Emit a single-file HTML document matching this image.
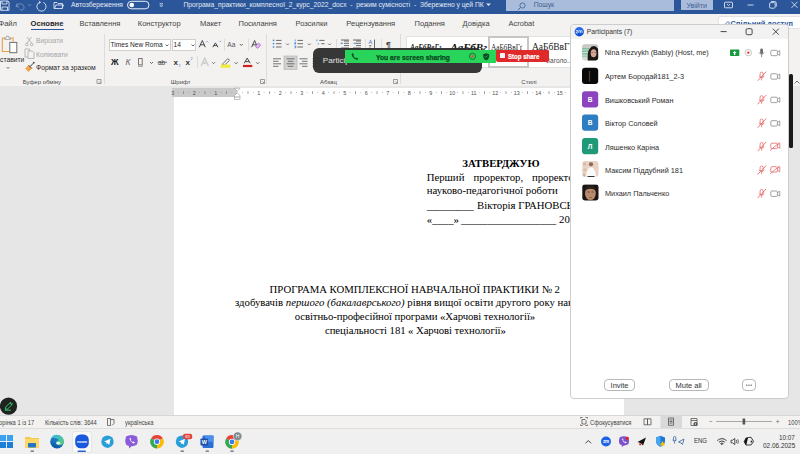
<!DOCTYPE html>
<html><head><meta charset="utf-8">
<style>
*{margin:0;padding:0;box-sizing:border-box}
html,body{width:800px;height:454px;overflow:hidden;background:#e6e6e6;font-family:"Liberation Sans",sans-serif;position:relative}
.a{position:absolute}
.t{position:absolute;white-space:pre;line-height:1}
svg{position:absolute;overflow:visible}
#title{left:0;top:0;width:800px;height:14px;background:#2b579a}
#tabs{left:0;top:14px;width:800px;height:17px;background:#f3f2f1}
#ribbon{left:0;top:31px;width:800px;height:56px;background:#f3f2f1;border-bottom:1px solid #dcdcdc}
#ruler{left:172px;top:88px;width:617px;height:9px;background:#fff}
#page{left:174px;top:97px;width:450px;height:318px;background:#fff}
#status{left:0;top:415px;width:800px;height:13px;background:#f3f2f1;border-top:1px solid #d6d6d6}
#taskbar{left:0;top:428px;width:800px;height:26px;background:#f0f0f0;border-top:1px solid #dedede}
.tt{font-size:6.75px;color:#e3e9f3;top:2px}
.tab{font-size:7.5px;color:#444;top:19.7px}
.rb{font-size:6.75px;color:#262626}
.dis{color:#a6a6a6}
.grp{font-size:6px;color:#484848;top:78.6px}
.sep{position:absolute;width:1px;background:#dcdcdc}
.doc{font-family:"Liberation Serif",serif;font-size:10.75px;color:#000;position:absolute;white-space:pre;line-height:1}
.st{font-size:6.3px;color:#444;top:419.5px;transform-origin:0 0;transform:scaleX(0.92)}
#zp{left:570.3px;top:23.8px;width:219px;height:375.2px;background:#fff;border:1px solid #cdcdcd;border-radius:4px;overflow:hidden}
#zph{left:0;top:0;width:219px;height:16px;background:#f2f2f2}
.pn{font-size:7.3px;color:#2e2e2e}
</style></head><body>
<!-- TITLE BAR -->
<div id="title" class="a"></div>
<svg style="left:0;top:0" width="800" height="14">
  <g fill="none" stroke="#dbe4f2" stroke-width="0.9">
    <!-- save -->
    <path d="M0.5 1h7.5l1 1v8.3h-8.5z"/><path d="M2 1v3h5v-3"/><path d="M2 10.3v-3.3h5.5v3.3"/>
    <!-- undo faded -->
    <path d="M17 3.5l-1 3 3 0.5" stroke="#7d97c4"/><path d="M16.3 6.3c1.5-3 6.5-3.5 7.5 0s-2 4.5-4 3" stroke="#7d97c4"/>
    <path d="M28 4.3l1.5 1.5 1.5-1.5" stroke="#7d97c4"/>
    <!-- redo circle -->
    <path d="M40 2.2a4.6 4.6 0 1 0 3.4 0.2"/><path d="M39 0.8l1.5 1.5-1.5 1.5"/>
    <!-- folder -->
    <path d="M54 2.5h3l1 1h4.5v5h-8.5z"/><path d="M54.5 8.3l1.5-3.3h7.5l-1.5 3.3"/>
    <!-- toggle -->
    <rect x="127.5" y="1.3" width="21.5" height="7.5" rx="3.75" stroke="#e8eef7" stroke-width="1"/>
    <path d="M159.5 3.5h3.5M159.8 5l1.5 2 1.5-2z" stroke="#b9c8e0" stroke-width="0.8"/>
  </g>
  <circle cx="131.8" cy="5" r="2.3" fill="#fff"/>
</svg>
<div class="t tt" style="left:71px">Автозбереження</div>
<div class="t tt" style="left:183.5px">Програма_практики_комплесної_2_курс_2022_docx  -  режим сумісності  -  Збережено у цей ПК</div>
<svg style="left:486px;top:3px" width="6" height="4"><path d="M0 0.5h5l-2.5 2.5z" fill="#dbe4f2"/></svg>
<div class="a" style="left:505.5px;top:0;width:168.5px;height:11px;background:#aabcdb"></div>
<svg style="left:517px;top:1.5px" width="10" height="10"><circle cx="5.5" cy="3.5" r="2.6" fill="none" stroke="#3b5f98" stroke-width="0.8"/><path d="M3.6 5.4l-2.6 2.6" stroke="#3b5f98" stroke-width="0.9"/></svg>
<div class="t tt" style="left:533.7px;color:#3d5d90">Пошук</div>
<div class="a" style="left:681px;top:0;width:31.6px;height:10px;background:#aabcdb"></div>
<div class="t tt" style="left:686.5px;top:2.3px;font-size:7px;color:#3f5f94">Увійти</div>
<svg style="left:0;top:0" width="800" height="14">
  <g fill="none" stroke="#dbe4f2" stroke-width="0.9">
    <rect x="724.5" y="2.2" width="8" height="5.6" rx="0.6"/><path d="M727 4.2l1.5 1.3 1.5-1.3"/>
    <path d="M747.5 5h6"/>
    <rect x="769.6" y="2.6" width="5.6" height="5.6" rx="1.3"/><path d="M771.2 1.5h3.3q1.8 0 1.8 1.8v3.3"/>
    <path d="M791.5 1.8l6 6M797.5 1.8l-6 6"/>
  </g>
</svg>
<!-- TABS -->
<div id="tabs" class="a"></div>
<div class="t tab" style="left:-1.5px">Файл</div>
<div class="t tab" style="left:30.5px;font-weight:bold;color:#262626;font-size:7.63px">Основне</div>
<div class="a" style="left:30.5px;top:28.6px;width:33px;height:1.8px;background:#2b579a"></div>
<div class="t tab" style="left:79.4px">Вставлення</div>
<div class="t tab" style="left:137.8px">Конструктор</div>
<div class="t tab" style="left:200px">Макет</div>
<div class="t tab" style="left:238.5px">Посилання</div>
<div class="t tab" style="left:295.5px">Розсилки</div>
<div class="t tab" style="left:346.3px">Рецензування</div>
<div class="t tab" style="left:414.6px">Подання</div>
<div class="t tab" style="left:462.6px">Довідка</div>
<div class="t tab" style="left:508.5px">Acrobat</div>
<!-- share button -->
<div class="a" style="left:718px;top:16px;width:84px;height:13px;background:#fff;border:1px solid #e3e3e3;border-radius:2px"></div>
<svg style="left:722px;top:19.5px" width="9" height="9"><path d="M1.5 7.5l0.5-2 4-4 1.5 1.5-4 4z" fill="none" stroke="#2b579a" stroke-width="0.8"/></svg>
<div class="t" style="left:730.6px;top:19.6px;font-size:7.4px;font-weight:bold;color:#2b579a">Спільний доступ</div>
<!-- RIBBON -->
<div id="ribbon" class="a"></div>
<svg style="left:0;top:0" width="800" height="90">
  <!-- paste icon -->
  <g fill="none">
    <path d="M4.8 38h-2.5v13.5h7" stroke="#eba043" stroke-width="1.1"/><path d="M10.3 38h2.8v3.8" stroke="#eba043" stroke-width="1.1"/>
    <path d="M4.6 39.3h6v-1.3h-1.4l-0.9-1.8h-1.6l-0.9 1.8h-1.2z" stroke="#8a8a8a" stroke-width="0.8" fill="#fff"/>
  </g>
  <rect x="9.8" y="42.4" width="7" height="10.3" fill="#fff" stroke="#707070" stroke-width="1"/>
  <path d="M6.5 67l1.5 1.5 1.5-1.5" fill="none" stroke="#555" stroke-width="0.8"/>
  <!-- scissors -->
  <g fill="none" stroke="#a8a8a8" stroke-width="0.8">
    <path d="M27 37l4.5 6M31.5 37l-4.5 6"/><circle cx="26.8" cy="44.5" r="1.3"/><circle cx="31.7" cy="44.5" r="1.3"/>
    <!-- copy -->
    <path d="M25 49h4.5v8h-4.5z"/><path d="M28 51h4.5l1.5 1.5v6h-6z" fill="#f3f2f1"/>
  </g>
  <!-- format painter -->
  <path d="M25.2 68.6l3.6-3.6 3.3 3.3-3.6 3.6z" fill="#f0a347"/>
  <path d="M28.6 65.2l3.3 3.3" stroke="#4a4a4a" stroke-width="0.9"/>
  <path d="M30.2 66.5l1.4-1.4M31 65.6l2.6-2.6" stroke="#4a4a4a" stroke-width="1"/>
  <circle cx="33.8" cy="62.6" r="0.9" fill="#4a4a4a"/>
  <!-- launchers -->
  <g fill="none" stroke="#777" stroke-width="0.7">
    <path d="M97 79.5h4v4h-4z"/><path d="M99 81.5l2 2"/>
    <path d="M260.5 79.5h4v4h-4z"/><path d="M262.5 81.5l2 2"/>
    <path d="M393.5 79.5h4v4h-4z"/><path d="M395.5 81.5l2 2"/>
  </g>
</svg>
<div class="t rb" style="left:0;top:57.2px">ставити</div>
<div class="t rb dis" style="left:36px;top:37.7px">Вирізати</div>
<div class="t rb dis" style="left:36px;top:51.5px">Копіювати</div>
<div class="t rb" style="left:36px;top:64.5px">Формат за зразком</div>
<div class="t grp" style="left:22.7px">Буфер обміну</div>
<div class="sep" style="left:103.5px;top:34px;height:50px"></div>

<!-- FONT group -->
<div class="a" style="left:109px;top:38.5px;width:61.5px;height:12px;background:#fff;border:1px solid #cfcfcf"></div>
<div class="a" style="left:171.5px;top:38.5px;width:24.5px;height:12px;background:#fff;border:1px solid #cfcfcf"></div>
<div class="t rb" style="left:110.5px;top:42.2px;font-size:6.6px">Times New Roma</div>
<div class="t rb" style="left:173.5px;top:42.2px;font-size:6.6px">14</div>
<svg style="left:0;top:0" width="800" height="90">
  <g fill="none" stroke="#444" stroke-width="0.8">
    <path d="M165.5 44.5l1.5 1.5 1.5-1.5M191.5 44.5l1.5 1.5 1.5-1.5"/>
    <path d="M150 62l1.5 1.5 1.5-1.5M212.3 62.3l1.3 1.3 1.3-1.3M234.6 62.3l1.5 1.5 1.5-1.5M256.2 62.3l1.5 1.5 1.5-1.5"/>
    <path d="M239.8 44l1.5 1.5 1.5-1.5"/>
  </g>
  <!-- A grow / shrink -->
  <g fill="none" stroke="#404040" stroke-width="0.95" stroke-linejoin="round">
    <path d="M199.3 47.2L202.3 40.5L205.3 47.2M200.4 44.8h3.8"/>
    <path d="M212.8 47.2L215.4 42.9L218 47.2M213.7 45.6h3.4"/>
    <path d="M251.6 47.2L254.6 40.5L257.6 47.2M252.7 44.8h3.8"/>
  </g>
  <path d="M206.2 42.3l1-1 1 1" fill="none" stroke="#3a7fd0" stroke-width="0.6"/>
  <path d="M219.3 40.8l1 1 1-1" fill="none" stroke="#3a7fd0" stroke-width="0.6"/>
  <text x="227.3" y="47.3" font-family="Liberation Sans" font-size="6.6" fill="#555">Aa</text>
  <path d="M255.3 46.2l3.2-3.2 2.2 2.2-3.2 3.2z" fill="#e2b8f0" stroke="#a050c8" stroke-width="0.7"/>
  <!-- row 2 -->
  <text x="111" y="64.9" font-family="Liberation Sans" font-size="8.3" font-weight="bold" fill="#222">Ж</text>
  <text x="125.5" y="64.9" font-family="Liberation Sans" font-size="8.3" font-style="italic" fill="#606060">К</text>
  <rect x="138.6" y="58.6" width="3.6" height="6.3" fill="none" stroke="#555" stroke-width="0.8"/>
  <path d="M138 66.3h5" stroke="#777" stroke-width="0.7"/>
  <text x="158" y="65" font-family="Liberation Sans" font-size="6.5" fill="#444">ab</text>
  <path d="M157.5 62.3h9.5" stroke="#444" stroke-width="0.7"/>
  <text x="173.5" y="65.3" font-family="Liberation Sans" font-size="8" font-weight="bold" fill="#333">x</text>
  <text x="178.6" y="66.6" font-family="Liberation Sans" font-size="3.6" fill="#3a7fd0">2</text>
  <text x="185.5" y="65.3" font-family="Liberation Sans" font-size="8" font-weight="bold" fill="#333">x</text>
  <text x="190.6" y="59.8" font-family="Liberation Sans" font-size="3.6" fill="#3a7fd0">2</text>
  <path d="M201.2 66L204.7 58L208.2 66M202.6 63h4.2" fill="none" stroke="#b8b8b8" stroke-width="1.4" stroke-linejoin="round"/>
  <path d="M201.2 66L204.7 58L208.2 66M202.6 63h4.2" fill="none" stroke="#f3f2f1" stroke-width="0.5"/>
  <!-- highlighter -->
  <path d="M222.8 63.8l5-5.2 1.7 1.7-5.2 5h-1.5z" fill="#fff" stroke="#444" stroke-width="0.8"/>
  <rect x="220.7" y="64.6" width="9.7" height="3.2" fill="#f0ec3a"/>
  <!-- font color -->
  <path d="M244.2 63.3L247.2 58.1L250.2 63.3M245.2 61.6h4" fill="none" stroke="#404040" stroke-width="0.95" stroke-linejoin="round"/>
  <rect x="243" y="64.9" width="9.3" height="2.2" fill="#d01f1f"/>
</svg>
<div class="sep" style="left:196.5px;top:56px;height:12px"></div>
<div class="sep" style="left:223.7px;top:39px;height:12px"></div>
<div class="sep" style="left:247.8px;top:39px;height:12px"></div>
<div class="t grp" style="left:170.8px">Шрифт</div>
<div class="sep" style="left:266px;top:34px;height:50px"></div>

<!-- PARAGRAPH group -->
<svg style="left:0;top:0" width="800" height="90">
  <g fill="#3a87d4">
    <rect x="272.8" y="39.6" width="1.5" height="1.5"/><rect x="272.8" y="42.9" width="1.5" height="1.5"/><rect x="272.8" y="46.2" width="1.5" height="1.5"/>
  </g>
  <g stroke="#5a5a5a" stroke-width="0.9">
    <path d="M276 40.4h5.5M276 43.7h5.5M276 47h5.5"/>
    <path d="M297.5 40.4h5.5M297.5 43.7h5.5M297.5 47h5.5"/>
    <path d="M319.3 40.4h5.2M321.3 43.7h3.2"/>
    <path d="M344 41h5M344 43.3h5M344 45.6h5M341 48h8"/><path d="M341 40h8" />
    <path d="M356 41h5M356 43.3h5M356 45.6h5M353 48h8"/><path d="M353 40h8"/>
    <path d="M374.5 39.5v9"/>
  </g>
  <g stroke="#3a87d4" stroke-width="0.8" fill="none">
    <path d="M295.2 39.5v1.8M294.6 42.7h1.2v0.6h-1.2v0.8h1.2M294.6 46h1.2v1.8h-1.2M294.8 46.9h1"/>
    <path d="M316.9 39.5v1.8M318.4 43v1.5"/>
    <path d="M341 43.3h2M341.8 42.5l-0.8 0.8 0.8 0.8M353.5 43.3h2M354.8 42.5l0.8 0.8-0.8 0.8"/>
  </g>
  <text x="368.5" y="44" font-family="Liberation Sans" font-size="5.5" fill="#2b6cc4">A</text>
  <text x="368.5" y="49" font-family="Liberation Sans" font-size="5" fill="#555">Z</text>
  <g fill="none" stroke="#555" stroke-width="0.8">
    <path d="M286.2 43.6l1.4 1.4 1.4-1.4M307.9 43.6l1.4 1.4 1.4-1.4M328.2 43.6l1.4 1.4 1.4-1.4"/>
  </g>
  <text x="386" y="47.5" font-family="Liberation Sans" font-size="8.5" font-weight="bold" fill="#444">¶</text>
  <!-- row 2 align -->
  <rect x="284" y="56" width="13" height="13.5" fill="#d2d2d2" stroke="#b5b5b5" stroke-width="0.7"/>
  <g stroke="#555" stroke-width="0.8">
    <path d="M273 58.8h8M273 61.3h5.5M273 63.8h8M273 66.3h5.5"/>
    <path d="M286.5 58.8h8M287.8 61.3h5.5M286.5 63.8h8M287.8 66.3h5.5"/>
    <path d="M299.5 58.8h8M302 61.3h5.5M299.5 63.8h8M302 66.3h5.5"/>
    <path d="M312.5 58.8h8M312.5 61.3h8M312.5 63.8h8M312.5 66.3h8"/>
  </g>
</svg>
<div class="sep" style="left:336.4px;top:39px;height:12px"></div>
<div class="sep" style="left:365.3px;top:39px;height:12px"></div>
<div class="sep" style="left:381px;top:39px;height:12px"></div>
<div class="t grp" style="left:320px">Абзац</div>
<div class="sep" style="left:399.5px;top:34px;height:50px"></div>

<!-- STYLES group -->
<div class="a" style="left:405.6px;top:35.6px;width:170px;height:32.5px;background:#fff;border:1px solid #e2e2e2"></div>
<div class="a" style="left:488.3px;top:35.7px;width:40.4px;height:32.3px;border:2px solid #c6c6c6"></div>
<div class="t" style="left:410px;top:45.3px;font-family:'Liberation Serif';font-size:7.2px;font-weight:bold;font-style:italic;color:#222">АаБбВвГг</div>
<div class="t" style="left:450.5px;top:41.8px;font-family:'Liberation Serif';font-size:11px;font-weight:bold;font-style:italic;color:#111">АаБбВг</div>
<div class="t" style="left:491px;top:44.3px;font-family:'Liberation Serif';font-size:7.3px;color:#222">АаБбВвГґ</div>
<div class="t" style="left:532px;top:42.8px;font-family:'Liberation Serif';font-size:9.5px;color:#222">АаБбВвГ</div>
<div class="t" style="left:546px;top:58.3px;font-size:6.6px;color:#505050">Заголо...</div>
<div class="t grp" style="left:521.3px">Стилі</div>
<!-- RULER + PAGE -->
<div class="a" style="left:0;top:86px;width:800px;height:2px;background:#e6e6e6"></div>
<div id="ruler" class="a"></div>
<svg style="left:0;top:0" width="800" height="100"><rect x="172" y="88" width="65.2" height="9" fill="#c9c9c9"/><text x="172.75" y="94.6" font-family="Liberation Sans" font-size="5.4" fill="#505050" text-anchor="middle">3</text><rect x="177.78" y="92.2" width="0.7" height="0.7" fill="#8a8a8a"/><rect x="183.15" y="91.2" width="0.7" height="2.8" fill="#7a7a7a"/><rect x="188.53" y="92.2" width="0.7" height="0.7" fill="#8a8a8a"/><text x="194.25" y="94.6" font-family="Liberation Sans" font-size="5.4" fill="#505050" text-anchor="middle">2</text><rect x="199.28" y="92.2" width="0.7" height="0.7" fill="#8a8a8a"/><rect x="204.65" y="91.2" width="0.7" height="2.8" fill="#7a7a7a"/><rect x="210.03" y="92.2" width="0.7" height="0.7" fill="#8a8a8a"/><text x="215.75" y="94.6" font-family="Liberation Sans" font-size="5.4" fill="#505050" text-anchor="middle">1</text><rect x="220.78" y="92.2" width="0.7" height="0.7" fill="#8a8a8a"/><rect x="226.15" y="91.2" width="0.7" height="2.8" fill="#7a7a7a"/><rect x="231.53" y="92.2" width="0.7" height="0.7" fill="#8a8a8a"/><rect x="242.28" y="92.2" width="0.7" height="0.7" fill="#8a8a8a"/><rect x="247.65" y="91.2" width="0.7" height="2.8" fill="#7a7a7a"/><rect x="253.03" y="92.2" width="0.7" height="0.7" fill="#8a8a8a"/><text x="258.75" y="94.6" font-family="Liberation Sans" font-size="5.4" fill="#505050" text-anchor="middle">1</text><rect x="263.77" y="92.2" width="0.7" height="0.7" fill="#8a8a8a"/><rect x="269.15" y="91.2" width="0.7" height="2.8" fill="#7a7a7a"/><rect x="274.52" y="92.2" width="0.7" height="0.7" fill="#8a8a8a"/><text x="280.25" y="94.6" font-family="Liberation Sans" font-size="5.4" fill="#505050" text-anchor="middle">2</text><rect x="285.27" y="92.2" width="0.7" height="0.7" fill="#8a8a8a"/><rect x="290.65" y="91.2" width="0.7" height="2.8" fill="#7a7a7a"/><rect x="296.02" y="92.2" width="0.7" height="0.7" fill="#8a8a8a"/><text x="301.75" y="94.6" font-family="Liberation Sans" font-size="5.4" fill="#505050" text-anchor="middle">3</text><rect x="306.77" y="92.2" width="0.7" height="0.7" fill="#8a8a8a"/><rect x="312.15" y="91.2" width="0.7" height="2.8" fill="#7a7a7a"/><rect x="317.52" y="92.2" width="0.7" height="0.7" fill="#8a8a8a"/><text x="323.25" y="94.6" font-family="Liberation Sans" font-size="5.4" fill="#505050" text-anchor="middle">4</text><rect x="328.27" y="92.2" width="0.7" height="0.7" fill="#8a8a8a"/><rect x="333.65" y="91.2" width="0.7" height="2.8" fill="#7a7a7a"/><rect x="339.02" y="92.2" width="0.7" height="0.7" fill="#8a8a8a"/><text x="344.75" y="94.6" font-family="Liberation Sans" font-size="5.4" fill="#505050" text-anchor="middle">5</text><rect x="349.77" y="92.2" width="0.7" height="0.7" fill="#8a8a8a"/><rect x="355.15" y="91.2" width="0.7" height="2.8" fill="#7a7a7a"/><rect x="360.52" y="92.2" width="0.7" height="0.7" fill="#8a8a8a"/><text x="366.25" y="94.6" font-family="Liberation Sans" font-size="5.4" fill="#505050" text-anchor="middle">6</text><rect x="371.27" y="92.2" width="0.7" height="0.7" fill="#8a8a8a"/><rect x="376.65" y="91.2" width="0.7" height="2.8" fill="#7a7a7a"/><rect x="382.02" y="92.2" width="0.7" height="0.7" fill="#8a8a8a"/><text x="387.75" y="94.6" font-family="Liberation Sans" font-size="5.4" fill="#505050" text-anchor="middle">7</text><rect x="392.77" y="92.2" width="0.7" height="0.7" fill="#8a8a8a"/><rect x="398.15" y="91.2" width="0.7" height="2.8" fill="#7a7a7a"/><rect x="403.52" y="92.2" width="0.7" height="0.7" fill="#8a8a8a"/><text x="409.25" y="94.6" font-family="Liberation Sans" font-size="5.4" fill="#505050" text-anchor="middle">8</text><rect x="414.27" y="92.2" width="0.7" height="0.7" fill="#8a8a8a"/><rect x="419.65" y="91.2" width="0.7" height="2.8" fill="#7a7a7a"/><rect x="425.02" y="92.2" width="0.7" height="0.7" fill="#8a8a8a"/><text x="430.75" y="94.6" font-family="Liberation Sans" font-size="5.4" fill="#505050" text-anchor="middle">9</text><rect x="435.77" y="92.2" width="0.7" height="0.7" fill="#8a8a8a"/><rect x="441.15" y="91.2" width="0.7" height="2.8" fill="#7a7a7a"/><rect x="446.52" y="92.2" width="0.7" height="0.7" fill="#8a8a8a"/><text x="452.25" y="94.6" font-family="Liberation Sans" font-size="5.4" fill="#505050" text-anchor="middle">10</text><rect x="457.27" y="92.2" width="0.7" height="0.7" fill="#8a8a8a"/><rect x="462.65" y="91.2" width="0.7" height="2.8" fill="#7a7a7a"/><rect x="468.02" y="92.2" width="0.7" height="0.7" fill="#8a8a8a"/><text x="473.75" y="94.6" font-family="Liberation Sans" font-size="5.4" fill="#505050" text-anchor="middle">11</text><rect x="478.77" y="92.2" width="0.7" height="0.7" fill="#8a8a8a"/><rect x="484.15" y="91.2" width="0.7" height="2.8" fill="#7a7a7a"/><rect x="489.52" y="92.2" width="0.7" height="0.7" fill="#8a8a8a"/><text x="495.25" y="94.6" font-family="Liberation Sans" font-size="5.4" fill="#505050" text-anchor="middle">12</text><rect x="500.27" y="92.2" width="0.7" height="0.7" fill="#8a8a8a"/><rect x="505.65" y="91.2" width="0.7" height="2.8" fill="#7a7a7a"/><rect x="511.02" y="92.2" width="0.7" height="0.7" fill="#8a8a8a"/><text x="516.75" y="94.6" font-family="Liberation Sans" font-size="5.4" fill="#505050" text-anchor="middle">13</text><rect x="521.77" y="92.2" width="0.7" height="0.7" fill="#8a8a8a"/><rect x="527.15" y="91.2" width="0.7" height="2.8" fill="#7a7a7a"/><rect x="532.52" y="92.2" width="0.7" height="0.7" fill="#8a8a8a"/><text x="538.25" y="94.6" font-family="Liberation Sans" font-size="5.4" fill="#505050" text-anchor="middle">14</text><rect x="543.27" y="92.2" width="0.7" height="0.7" fill="#8a8a8a"/><rect x="548.65" y="91.2" width="0.7" height="2.8" fill="#7a7a7a"/><rect x="554.02" y="92.2" width="0.7" height="0.7" fill="#8a8a8a"/><text x="559.75" y="94.6" font-family="Liberation Sans" font-size="5.4" fill="#505050" text-anchor="middle">15</text><rect x="564.77" y="92.2" width="0.7" height="0.7" fill="#8a8a8a"/><text x="581.25" y="94.6" font-family="Liberation Sans" font-size="5.4" fill="#505050" text-anchor="middle">16</text><path d="M234.5 88.2h5.5l-2.75 3.2z" fill="#fff" stroke="#9a9a9a" stroke-width="0.6"/></svg><div id="page" class="a"></div>
<svg style="left:0;top:0" width="800" height="110"><path d="M237.25 92.9l2.75 2.5v1.7h-5.5v-1.7z" fill="#fff" stroke="#9a9a9a" stroke-width="0.6"/><rect x="234.5" y="97.1" width="5.5" height="2.5" fill="#fff" stroke="#9a9a9a" stroke-width="0.6"/></svg>
<div class="doc" style="left:462.3px;top:158.1px;font-weight:bold">ЗАТВЕРДЖУЮ</div>
<div class="doc" style="left:426.7px;top:171.8px">Перший</div>
<div class="doc" style="left:473.4px;top:171.8px">проректор,</div>
<div class="doc" style="left:531.9px;top:171.8px">проректор з</div>
<div class="doc" style="left:426.7px;top:185.4px">науково-педагогічної роботи</div>
<div class="doc" style="left:426.7px;top:200.0px;letter-spacing:-0.18px">_________</div><div class="doc" style="left:477px;top:200.0px">Вікторія ГРАНОВСЬКА</div>
<div class="doc" style="left:426.7px;top:213.5px">«____»</div><div class="doc" style="left:461px;top:213.5px;letter-spacing:-0.1px">__________________</div><div class="doc" style="left:559px;top:213.5px">2025</div>
<div class="doc" style="left:269.6px;top:283.9px;letter-spacing:-0.03px">ПРОГРАМА КОМПЛЕКСНОЇ НАВЧАЛЬНОЇ ПРАКТИКИ № 2</div>
<div class="doc" style="left:235px;top:297.4px">здобувачів <i>першого (бакалаврського)</i> рівня вищої освіти другого року навчання</div>
<div class="doc" style="left:294.7px;top:311.3px;letter-spacing:-0.085px">освітньо-професійної програми «Харчові технології»</div>
<div class="doc" style="left:325px;top:325.2px;letter-spacing:-0.08px">спеціальності 181 « Харчові технології»</div>
<!-- right scrollbar -->
<div class="a" style="left:789px;top:86px;width:11px;height:329px;background:#e6e6e6"></div>
<div class="a" style="left:789.4px;top:74px;width:4px;height:74px;background:#1a1a1a;border-radius:1.5px"></div>
<svg style="left:794px;top:80px" width="6" height="5"><path d="M0.5 3.5l2.5-2.5 2.5 2.5" fill="none" stroke="#555" stroke-width="0.8"/></svg>
<!-- pen circle -->
<svg style="left:0;top:397px" width="18" height="18"><circle cx="8.5" cy="9.2" r="8.6" fill="#1f2421"/>
<path d="M5.2 12.4l0.6-2.4 4.8-4.8 1.9 1.9-4.8 4.8z M9.8 6l1.9 1.9" fill="none" stroke="#3ecf78" stroke-width="0.9"/><path d="M5 13.2h6" stroke="#3ecf78" stroke-width="0.9"/></svg>

<!-- STATUS BAR -->
<div id="status" class="a"></div>
<div class="t st" style="left:-1px">орінка 1 із 17</div>
<div class="t st" style="left:45px">Кількість слів: 3644</div>
<svg style="left:0;top:415px" width="800" height="13">
  <g fill="none" stroke="#555" stroke-width="0.8">
    <path d="M107.5 3.5h3v7h-3z M110.5 4.5h3.5v4 M112 10.5l2-2"/>
    <path d="M580.5 3.5v-1h2M580.5 9.5v1h2M587.5 3.5v-1h-2M587.5 9.5v1h-2M582 4.5h3l1 1v3.5h-4z"/>
    <path d="M644 3.8h3.5v6h-3.5zM647.5 3.8h3.5v6h-3.5z"/>
    <path d="M691 3.5h6v7h-6zM691 5.5h6"/>
  </g>
  <rect x="660.5" y="0.5" width="21.5" height="12.5" fill="#d9d9d9"/>
  <path d="M668.5 3h5v7.3h-5z M669.5 5h3M669.5 6.5h3M669.5 8h3" fill="none" stroke="#555" stroke-width="0.8"/>
  <circle cx="695.5" cy="9" r="2.1" fill="#555"/><path d="M695.5 8v2" stroke="#fff" stroke-width="0.6"/>
  <path d="M709.3 6.5h3M716 6.5h56" stroke="#888" stroke-width="0.7"/>
  <rect x="742.6" y="3.5" width="2.6" height="6" fill="#555"/>
  <path d="M776 6.5h3.5M777.7 4.8v3.5" stroke="#888" stroke-width="0.7"/>
</svg>
<div class="t st" style="left:125px">українська</div>
<div class="t st" style="left:590px">Сфокусуватися</div>
<div class="t st" style="left:788px">100%</div>
<!-- TASKBAR -->
<div id="taskbar" class="a"></div>
<div class="a" style="left:72px;top:431px;width:19.5px;height:22px;background:#f9f9f9;border-radius:3px;border:1px solid #e6e6e6"></div>
<svg style="left:0;top:428px" width="800" height="26">
  <!-- windows -->
  <g fill="#2f8fe0">
    <rect x="0" y="7" width="6" height="6" fill="#3aa0ef"/><rect x="7" y="7" width="6" height="6" fill="#3aa0ef"/>
    <rect x="0" y="14" width="6" height="6" fill="#1e7fd8"/><rect x="7" y="14" width="6" height="6" fill="#1e7fd8"/>
  </g>
  <!-- explorer -->
  <path d="M25 9h5l1 1h8v10h-14z" fill="#f2c94c"/><rect x="25" y="11" width="14" height="9" fill="#ffd865"/>
  <rect x="28" y="15" width="8" height="4.5" fill="#2277c8" rx="0.6"/>
  <rect x="30.5" y="22.6" width="3.5" height="1.2" fill="#666" rx="0.6"/>
  <!-- edge -->
  <defs>
    <linearGradient id="eg" x1="0" y1="1" x2="0.3" y2="0"><stop offset="0" stop-color="#0a4c98"/><stop offset="1" stop-color="#1e8fd6"/></linearGradient>
    <linearGradient id="eg2" x1="0" y1="0" x2="1" y2="1"><stop offset="0" stop-color="#35b5e8"/><stop offset="1" stop-color="#5fd06a"/></linearGradient>
  </defs>
  <circle cx="57" cy="13.8" r="6.8" fill="url(#eg)"/>
  <path d="M51.2 10.2A6.8 6.8 0 0 1 63.8 13.8c0 2.2-2 3.4-4.2 3.4c-2.4 0-3.6-1.4-3.6-2.6c0-1.4 1.4-2.2 3-2.2c-1.2-2.6-5.6-3.4-7.8-2.2z" fill="url(#eg2)"/>
  <ellipse cx="58.3" cy="15.2" rx="1.9" ry="1.4" fill="#dff3fb"/>
  <!-- zoom -->
  <rect x="75.2" y="6.6" width="13.6" height="13.6" rx="5.2" fill="#1a58dd"/>
  <text x="82" y="14.9" font-family="Liberation Sans" font-size="3.9" font-weight="bold" fill="#fff" text-anchor="middle" letter-spacing="-0.1">zoom</text>
  <rect x="77.5" y="22.5" width="8.5" height="1.6" rx="0.8" fill="#2a62c9"/>
  <!-- telegram -->
  <circle cx="107.5" cy="13.7" r="6.2" fill="#2a9ed8"/>
  <path d="M104 13.5l6.5-2.8-1.2 6-2-1.5-1 1 0.2-2z" fill="#fff"/>
  <!-- viber -->
  <path d="M126 8.5q5.5-3 11 0q1.5 4 0 8q-2.5 2-5.5 1.8l-2.5 2.2v-2.6q-2.5-0.6-3-1.4q-1.5-4 0-8z" fill="#8a5cd8"/>
  <path d="M129.5 10.5q0.8 3.5 4.5 5l1-1-1.5-1-0.7 0.6q-1.5-0.8-2.2-2.2l0.6-0.7-1-1.5z" fill="#fff"/>
  <!-- chrome --><path d="M157 13.7L151.11 10.30A6.8 6.8 0 0 1 162.89 10.30z" fill="#e94235"/><path d="M157 13.7L162.89 10.30A6.8 6.8 0 0 1 157.00 20.50z" fill="#fbbc04"/><path d="M157 13.7L157.00 20.50A6.8 6.8 0 0 1 151.11 10.30z" fill="#34a853"/><circle cx="157" cy="13.7" r="3.13" fill="#fff"/><circle cx="157" cy="13.7" r="2.38" fill="#3b7de8"/>
  <!-- telegram 2 -->
  <circle cx="182" cy="13.7" r="6.2" fill="#2a9ed8"/>
  <path d="M178.5 13.5l6.5-2.8-1.2 6-2-1.5-1 1 0.2-2z" fill="#fff"/>
  <rect x="183" y="5.8" width="9.2" height="5.4" rx="2" fill="#e0443c"/>
  <text x="187.6" y="10.2" font-family="Liberation Sans" font-size="4" fill="#fff" text-anchor="middle">83</text>
  <rect x="180.5" y="22.6" width="3.5" height="1.2" fill="#666" rx="0.6"/>
  <!-- word -->
  <rect x="202.5" y="7.5" width="11" height="12.5" rx="1" fill="#2b6fd6"/>
  <rect x="205" y="7.5" width="8.5" height="6.3" fill="#4a90ea"/>
  <rect x="200.5" y="10.5" width="7.5" height="7" rx="0.8" fill="#1a4fa8"/>
  <text x="204.3" y="16" font-family="Liberation Sans" font-size="5.5" font-weight="bold" fill="#fff" text-anchor="middle">W</text>
  <rect x="205.5" y="22.6" width="3.5" height="1.2" fill="#666" rx="0.6"/>
  <!-- chrome 2 --><path d="M232 13.9L226.11 10.50A6.8 6.8 0 0 1 237.89 10.50z" fill="#e94235"/><path d="M232 13.9L237.89 10.50A6.8 6.8 0 0 1 232.00 20.70z" fill="#fbbc04"/><path d="M232 13.9L232.00 20.70A6.8 6.8 0 0 1 226.11 10.50z" fill="#34a853"/><circle cx="232" cy="13.9" r="3.13" fill="#fff"/><circle cx="232" cy="13.9" r="2.38" fill="#3b7de8"/>
  <circle cx="237.6" cy="8.2" r="4.3" fill="#7b8890" stroke="#f0f0f0" stroke-width="0.6"/>
  <text x="237.6" y="10.1" font-family="Liberation Sans" font-size="5" fill="#fff" text-anchor="middle">H</text>
  <rect x="230.3" y="22.6" width="3.5" height="1.2" fill="#666" rx="0.6"/>
  <!-- tray -->
  <path d="M585.5 15.3l2.8-2.8 2.8 2.8" fill="none" stroke="#333" stroke-width="0.9"/>
  <circle cx="606" cy="13.5" r="5" fill="#1d63e6"/>
  <text x="606" y="15.1" font-family="Liberation Sans" font-size="4.6" font-weight="bold" fill="#fff" text-anchor="middle" letter-spacing="-0.2">zm</text>
  <path d="M619.5 9.5q4.5-2.3 9 0q1.1 3.3 0 6.6q-2.2 1.6-4.5 1.4l-2.2 1.6v-2.1q-1.9-0.5-2.3-1.1q-1.1-3.2 0-6.4z" fill="#7d52c8"/><path d="M622 11q0.7 3 3.8 4.3l0.9-0.9-1.3-0.9-0.6 0.5q-1.2-0.7-1.8-1.9l0.5-0.6-0.9-1.3z" fill="#fff"/>
  <circle cx="627.3" cy="10.3" r="1.5" fill="#e02424"/>
  <path d="M637.5 14l8.5-4.5-3 8-2-2.2z" fill="#111"/><circle cx="640.2" cy="16.3" r="1.1" fill="#d02424"/>
  <path d="M656 9.5l4.5-1.8 4.5 1.8v3.5q0 4-4.5 5.8q-4.5-1.8-4.5-5.8z" fill="#1e78d0"/>
  <path d="M660.5 7.7v11.1q-4.5-1.8-4.5-5.8v-3.5z" fill="#4aa5f0"/>
  <path d="M662.5 13l2.6 4.4h-5.2z" fill="#f5c400"/>
  <g fill="none" stroke="#4a6fa8" stroke-width="0.9"><rect x="673.5" y="8.5" width="2.3" height="4.5" rx="1.1"/><path d="M672.5 12q1.5 2.5 4 0M674.6 14v1.5M678.5 14l5.5-3-1.5 5.5-1.5-1.5z"/></g>
  <!-- wifi -->
  <g fill="none" stroke="#2a2a2a" stroke-width="0.9" stroke-linecap="round">
    <path d="M717.6 12.3q4.3-3.6 8.6 0M719.2 13.9q2.7-2.2 5.4 0M720.7 15.4q1.2-0.9 2.4 0"/>
  </g>
  <circle cx="721.9" cy="16.3" r="0.75" fill="#2a2a2a"/>
  <path d="M731 12.2h1.6l2.2-1.8v6.2l-2.2-1.8h-1.6z" fill="none" stroke="#2a2a2a" stroke-width="0.8"/>
  <path d="M736.3 12q0.8 1.5 0 3M737.7 11.2q1.4 2.3 0 4.6" fill="none" stroke="#2a2a2a" stroke-width="0.7"/>
  <path d="M746 10l5-0.8 2.6 4.3-2.6 3.5h-5l-1.8-3.5z" fill="none" stroke="#2a2a2a" stroke-width="0.9"/>
  <path d="M746 10l2-0.3-1.8 7.8-2-3.5z" fill="#111"/>
  <path d="M750.8 12.3l1.8 1.3-1.8 1.4z" fill="#111"/>
</svg>
<div class="t" style="left:693.9px;top:438.2px;font-size:6.9px;color:#333;transform-origin:0 0;transform:scaleX(0.87)">ENG</div>
<div class="t" style="left:779.4px;top:434px;font-size:7px;color:#333;transform-origin:0 0;transform:scaleX(0.9)">10:07</div>
<div class="t" style="left:762.9px;top:442.4px;font-size:7px;color:#333;transform-origin:0 0;transform:scaleX(0.92)">02.06.2025</div>
<!-- SHARE TOOLBAR -->
<div class="a" style="left:313px;top:47.5px;width:169px;height:25px;background:rgba(44,44,44,0.95);border-radius:6px"></div>
<div class="t" style="left:322.8px;top:56.9px;font-size:8.1px;color:#e2e2e2">Particip</div>
<div class="a" style="left:344.8px;top:49.8px;width:150.8px;height:13.2px;background:#28d55a"></div>
<svg style="left:350px;top:52px" width="10" height="9"><path d="M2 1.2q-1 1.6 0.5 3.6q1.8 2.3 4.2 3q1.2 0.1 1.7-0.8l-1.6-1.4-1 0.6q-1.6-0.8-2.4-2.4l0.6-0.9-1.2-1.7z" fill="#0c4d24"/></svg>
<div class="t" style="left:375.5px;top:53.5px;font-size:7.2px;font-weight:bold;color:#0b4a22;-webkit-text-stroke:0.25px #0b4a22;transform-origin:0 0;transform:scaleX(0.937)">You are screen sharing</div>
<svg style="left:466px;top:50px" width="26" height="13">
  <circle cx="6.5" cy="6.3" r="3.1" fill="none" stroke="#0d5a28" stroke-width="0.8"/><circle cx="6.5" cy="6.3" r="1.3" fill="#d8553a"/>
  <path d="M17.2 4.2l3-1 3 1v2.3q0 2.6-3 3.9q-3-1.3-3-3.9z" fill="#0d4a22"/>
  <path d="M18.8 6.4l1 1 1.8-1.9" fill="none" stroke="#26d25b" stroke-width="0.7"/>
</svg>
<div class="a" style="left:495.6px;top:50.2px;width:53.3px;height:12.3px;background:#e02a2a;border-radius:0 1px 2px 2px"></div>
<div class="a" style="left:499.8px;top:53.3px;width:4.8px;height:4.6px;background:#f4f6fa;border-radius:0.6px"></div>
<div class="t" style="left:508px;top:53.7px;font-size:6.9px;font-weight:bold;color:#fff;-webkit-text-stroke:0.2px #fff;transform-origin:0 0;transform:scaleX(0.88)">Stop share</div>

<!-- ZOOM PANEL -->
<div id="zp" class="a">
  <div id="zph" class="a" style="height:13.9px"></div>
</div>
<svg style="left:570px;top:23.6px" width="230" height="380">
  <defs><linearGradient id="zg" x1="0" y1="0" x2="0" y2="1"><stop offset="0" stop-color="#2b73f0"/><stop offset="1" stop-color="#0b4bcf"/></linearGradient></defs>
  <circle cx="9.3" cy="7.7" r="4.7" fill="url(#zg)"/>
  <path d="M5.9 6.6h2.1l-2.1 2.3h2.1M8.9 8.9v-2.3M8.9 7.2q0-0.6 0.8-0.6t0.8 0.6v1.7M10.5 7.2q0-0.6 0.8-0.6t0.8 0.6v1.7" fill="none" stroke="#fff" stroke-width="0.7"/>
  <g fill="none" stroke="#333" stroke-width="0.9">
    <path d="M150.6 7.6h6"/>
    <rect x="176.1" y="4.7" width="6" height="6" rx="1.2"/>
    <path d="M202.8 4.7l6 6M208.8 4.7l-6 6"/>
  </g>
</svg>
<div class="t" style="left:586.8px;top:28.9px;font-size:6.75px;color:#333">Participants (7)</div>

<!-- avatars -->
<svg style="left:0;top:0" width="800" height="454">
  <defs>
    <clipPath id="c1"><rect x="582" y="44.2" width="16.2" height="16.2" rx="3"/></clipPath>
    <clipPath id="c6"><rect x="582.3" y="160.9" width="16.2" height="16.2" rx="3"/></clipPath>
    <clipPath id="c7"><rect x="582.3" y="184.3" width="16.2" height="16.2" rx="3"/></clipPath>
  </defs>
  <g clip-path="url(#c1)">
    <rect x="582" y="44.2" width="17" height="17" fill="#d6dad6"/>
    <rect x="582" y="44.2" width="17" height="3" fill="#c8c8c4"/>
    <rect x="582" y="47.8" width="7" height="1.6" fill="#7cbf9a"/><rect x="582" y="50.4" width="7" height="1.6" fill="#80c29d"/><rect x="582" y="53" width="7" height="1.6" fill="#80c29d"/><rect x="582" y="55.6" width="7" height="1.4" fill="#9ccdb0"/>
    <path d="M587.8 61q-0.5-9 1.5-12q2-3 4.5-3q2.5 0 4 2.5q1.5 3 1 12.5z" fill="#1c1614"/>
    <ellipse cx="593.6" cy="53.2" rx="2.9" ry="4" fill="#d2a696"/>
    <path d="M591.5 52.5h1.3M594.5 52.5h1.3" stroke="#5a3a30" stroke-width="0.6"/>
  </g>
  <rect x="582" y="67.8" width="16.2" height="16.2" rx="3" fill="#0a0a0a"/>
  <path d="M589.5 71v10.5" stroke="#4a4038" stroke-width="1.3"/>
  <rect x="582" y="91.2" width="16.2" height="16.2" rx="3" fill="#8c44be"/>
  <rect x="582" y="114.6" width="16.2" height="16.2" rx="3" fill="#2f7dc2"/>
  <rect x="582" y="138.1" width="16.2" height="16.2" rx="3" fill="#1f9a79"/>
  <g clip-path="url(#c6)">
    <rect x="582" y="160.5" width="17" height="17" fill="#e9d3c4"/>
    <circle cx="584.5" cy="164" r="1.6" fill="#d8b8a0"/><circle cx="585" cy="170" r="1.8" fill="#dcc0a8"/><circle cx="584" cy="175" r="1.5" fill="#d6b49c"/>
    <path d="M586 177.5q0-9 5-10.5q5 1.5 5 10.5z" fill="#fafafa"/>
    <circle cx="591" cy="164.3" r="2.1" fill="#8a6a58"/>
    <path d="M587.5 176.5h7" stroke="#333" stroke-width="1.2"/>
  </g>
  <g clip-path="url(#c7)">
    <rect x="582" y="184.5" width="17" height="17" fill="#1a1412"/>
    <ellipse cx="590.4" cy="193.5" rx="5.4" ry="6.6" fill="#b88a6e"/>
    <path d="M584.8 190.5q0.6-5 5.6-5q5 0 5.6 5q-2.4-1.8-5.6-1.8q-3.2 0-5.6 1.8z" fill="#2a1e18"/>
    <path d="M587.5 192h2M591.5 192h2" stroke="#4a3428" stroke-width="0.8"/>
    <path d="M589 197.5h3" stroke="#7a5040" stroke-width="0.6"/>
  </g>
  <g font-family="Liberation Sans" font-size="6.6" font-weight="bold" fill="#fff" text-anchor="middle">
    <text x="590.1" y="101.8">В</text><text x="590.1" y="125.2">В</text><text x="590.1" y="148.7">Л</text>
  </g>
</svg>
<div class="t pn" style="left:604.7px;top:49.8px;font-size:7.15px">Nina Rezvykh (Babiy) (Host, me)</div>
<div class="t pn" style="left:605px;top:73.2px">Артем Бородай181_2-3</div>
<div class="t pn" style="left:605px;top:96.6px">Вишковський Роман</div>
<div class="t pn" style="left:605px;top:120.0px">Віктор Соловей</div>
<div class="t pn" style="left:605px;top:143.5px">Ляшенко Каріна</div>
<div class="t pn" style="left:605px;top:166.9px">Максим Піддубний 181</div>
<div class="t pn" style="left:605px;top:190.4px">Михаил Пальченко</div>
<!-- right icons -->
<svg style="left:0;top:0" width="800" height="454">
  <rect x="730" y="49.5" width="9.3" height="6.6" rx="0.8" fill="#179a3e"/>
  <path d="M734.6 51l-2 2h1.3v2h1.4v-2h1.3z" fill="#fff"/>
  <circle cx="748.3" cy="52.6" r="3.2" fill="none" stroke="#b8b8b8" stroke-width="0.8"/><circle cx="748.3" cy="52.6" r="1.2" fill="#e0342c"/>
  <rect x="760.2" y="48.5" width="2.8" height="5.4" rx="1.4" fill="#6b6b6b"/>
  <path d="M759 52.5q2.6 3.6 5.2 0M761.6 54.8v2.4" fill="none" stroke="#6b6b6b" stroke-width="0.8"/>
  <g id="cam" fill="none" stroke="#8a8a8a" stroke-width="0.8">
    <rect x="770.8" y="50.3" width="6.6" height="5.4" rx="1"/><path d="M777.4 52l2.4-1.4v4.8l-2.4-1.4"/>
  </g>
  <use href="#cam" y="23.45"/><use href="#cam" y="46.9"/><use href="#cam" y="70.35"/><use href="#cam" y="140.7"/>
  <g id="mm" fill="none" stroke="#e46b6b" stroke-width="0.8">
    <rect x="760.1" y="72.2" width="3" height="5.2" rx="1.5"/><path d="M758.9 76.2q2.7 3.4 5.4 0M761.6 78.4v2"/><path d="M757.6 80.8l8.6-9.2" stroke-width="0.9"/>
  </g>
  <use href="#mm" y="23.45"/><use href="#mm" y="46.9"/><use href="#mm" y="70.35"/><use href="#mm" y="93.8"/><use href="#mm" y="117.25"/>
  <g id="cm" fill="none" stroke="#e46b6b" stroke-width="0.8">
    <rect x="770.8" y="143.2" width="6.6" height="5.4" rx="1"/><path d="M777.4 144.9l2.4-1.4v4.8l-2.4-1.4"/><path d="M770 150.5l9.5-8"/>
  </g>
  <use href="#cm" y="23.45"/>
</svg>
<!-- bottom buttons -->
<div class="a" style="left:604.4px;top:378.6px;width:30.6px;height:12.9px;border:1px solid #b8b8b8;border-radius:4px;background:#fff"></div>
<div class="t" style="left:610.6px;top:381.6px;font-size:7.5px;color:#333">Invite</div>
<div class="a" style="left:668.7px;top:378.6px;width:39.9px;height:12.9px;border:1px solid #b8b8b8;border-radius:4px;background:#fff"></div>
<div class="t" style="left:675.5px;top:381.6px;font-size:7.5px;color:#333">Mute all</div>
<div class="a" style="left:742.3px;top:378.6px;width:13.5px;height:12.9px;border:1px solid #b8b8b8;border-radius:4px;background:#fff"></div>
<svg style="left:742px;top:378px" width="14" height="14"><circle cx="4.8" cy="7.2" r="0.6" fill="#333"/><circle cx="7" cy="7.2" r="0.6" fill="#333"/><circle cx="9.2" cy="7.2" r="0.6" fill="#333"/></svg>
</body></html>
